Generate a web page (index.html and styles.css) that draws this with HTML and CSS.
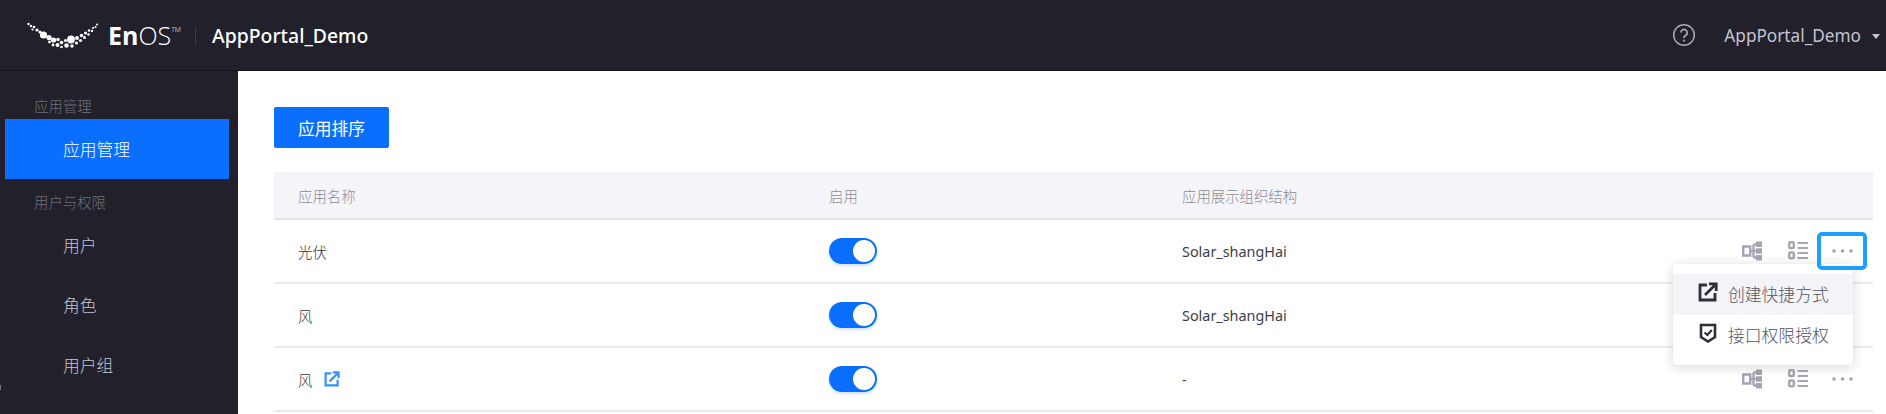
FILE: index.html
```html
<!DOCTYPE html>
<html>
<head>
    <title>AppPortal_Demo</title>
    <meta charset="utf-8">
    <meta name="viewport" content="width=device-width, initial-scale=1">
    <link rel="stylesheet" href="styles.css">
</head>
<body>
<svg class="svg-defs" width="0" height="0">
    <symbol id="icon-tree" viewBox="0 0 20 20">
        <path d="M1.200 5.500h7v9h-7zM8 10h6M11.500 3.500v13M11.500 3.500H14M11.500 16.500H14" fill="none" stroke="#a5a5b3" stroke-width="2.400"/>
        <path d="M14 .5h6v5.500h-6zM14 7.200h6v5.600h-6zM14 14h6v5.500h-6z" fill="#a5a5b3"/>
    </symbol>
    <symbol id="icon-list" viewBox="0 0 20 20">
        <rect x="1.200" y="1.200" width="4.600" height="5.800" rx="1" fill="none" stroke="#a5a5b3" stroke-width="2.400"/>
        <rect x="1.200" y="11.500" width="4.600" height="5.800" rx="1" fill="none" stroke="#a5a5b3" stroke-width="2.400"/>
        <path d="M9.500 2h10.500M9.500 7h10.500M9.500 12h10.500M9.500 17h10.500" fill="none" stroke="#a5a5b3" stroke-width="2.200"/>
    </symbol>
    <symbol id="icon-more" viewBox="0 0 21 6">
        <circle cx="2" cy="3" r="1.800" fill="#a5a5b3"/>
        <circle cx="10.500" cy="3" r="1.800" fill="#a5a5b3"/>
        <circle cx="19" cy="3" r="1.800" fill="#a5a5b3"/>
    </symbol>
    <symbol id="icon-share" viewBox="0 0 20 20">
        <path d="M9 3H2v15h15v-7" fill="none" stroke="currentColor" stroke-width="2.800"/>
        <path d="M7 13 16.500 3.500M11 1.800h7.200v7.200" fill="none" stroke="currentColor" stroke-width="2.800"/>
    </symbol>
    <symbol id="icon-shield" viewBox="0 0 20 20">
        <path d="M3 2h14v12l-7 4.500L3 14z" fill="none" stroke="currentColor" stroke-width="2.600"/>
        <path d="M6.500 9.500 9.300 12l4.500-5" fill="none" stroke="currentColor" stroke-width="2.200"/>
    </symbol>
</svg>

<header class="topbar">
    <div class="brand">
        <svg class="logo-dots" width="72" height="28" viewBox="0 0 72 28">
            <g fill="#fff">
                <circle cx="1.500" cy="2" r="1.200"/><circle cx="4" cy="4" r="1.200"/><circle cx="7" cy="5" r="1.300"/>
                <circle cx="5.500" cy="7.500" r="1.100"/><circle cx="10" cy="8" r="1.600"/><circle cx="13" cy="10" r="1.500"/>
                <circle cx="16.500" cy="13" r="3.600"/><circle cx="22" cy="15.500" r="2.600"/><circle cx="26.500" cy="18" r="2.600"/>
                <circle cx="22.500" cy="20" r="1.400"/><circle cx="26" cy="23" r="1.400"/><circle cx="30.500" cy="23" r="2"/>
                <circle cx="31" cy="17.500" r="1.800"/><circle cx="34.500" cy="20.500" r="1.800"/><circle cx="34.500" cy="25" r="1.300"/>
                <circle cx="39.500" cy="23.500" r="2.300"/><circle cx="38.500" cy="18.500" r="1.600"/><circle cx="44" cy="17.500" r="3.900"/>
                <circle cx="45" cy="24" r="1.800"/><circle cx="49.500" cy="21" r="1.600"/><circle cx="50" cy="16" r="2"/>
                <circle cx="53.500" cy="18.500" r="1.600"/><circle cx="54.500" cy="13.500" r="1.800"/><circle cx="57.500" cy="15.500" r="1.500"/>
                <circle cx="58.500" cy="11" r="1.600"/><circle cx="61.500" cy="12.500" r="1.300"/><circle cx="62" cy="8.500" r="1.300"/>
                <circle cx="65" cy="9" r="1.200"/><circle cx="66" cy="6" r="1.100"/><circle cx="68.500" cy="5" r="1.100"/>
                <circle cx="70" cy="2.500" r="1"/>
            </g>
        </svg>
        <div class="logo-text"><b>En</b>OS<sup>TM</sup></div>
        <span class="brand-sep"></span>
        <span class="app-title">AppPortal_Demo</span>
    </div>
    <div class="user-area">
        <svg class="help-icon" width="24" height="24" viewBox="0 0 24 24">
            <circle cx="12" cy="12" r="10.300" fill="none" stroke="#a9a9b6" stroke-width="1.500"/>
            <path d="M8.800 9.600a3.200 3.200 0 1 1 5 2.700c-1.200.8-1.800 1.300-1.800 2.700" fill="none" stroke="#a9a9b6" stroke-width="1.700"/>
            <circle cx="12" cy="17.600" r="1.100" fill="#a9a9b6"/>
        </svg>
        <span class="user-name">AppPortal_Demo</span>
        <span class="caret"></span>
    </div>
</header>

<div class="layout">
    <nav class="sidebar">
        <div class="nav-group">应用管理</div>
        <a class="nav-item active">应用管理</a>
        <div class="nav-group">用户与权限</div>
        <a class="nav-item">用户</a>
        <a class="nav-item">角色</a>
        <a class="nav-item">用户组</a>
        <span class="edge-mark"></span>
    </nav>

    <main class="content">
        <button class="btn-primary">应用排序</button>

        <div class="table">
            <div class="row head">
                <div class="col-name">应用名称</div>
                <div class="col-switch">启用</div>
                <div class="col-org">应用展示组织结构</div>
            </div>
            <div class="row">
                <div class="col-name">光伏</div>
                <div class="col-switch"><span class="switch"></span></div>
                <div class="col-org org-value">Solar_shangHai</div>
                <div class="col-actions">
                    <svg class="act"><use href="#icon-tree"/></svg>
                    <svg class="act"><use href="#icon-list"/></svg>
                    <span class="more focused"><svg class="dots"><use href="#icon-more"/></svg></span>
                    <div class="menu">
                        <div class="menu-item hover"><svg class="menu-icon"><use href="#icon-share"/></svg>创建快捷方式</div>
                        <div class="menu-item"><svg class="menu-icon"><use href="#icon-shield"/></svg>接口权限授权</div>
                    </div>
                </div>
            </div>
            <div class="row">
                <div class="col-name">风</div>
                <div class="col-switch"><span class="switch"></span></div>
                <div class="col-org org-value">Solar_shangHai</div>
            </div>
            <div class="row">
                <div class="col-name">风<svg class="link-icon"><use href="#icon-share"/></svg></div>
                <div class="col-switch"><span class="switch"></span></div>
                <div class="col-org org-value">-</div>
                <div class="col-actions">
                    <svg class="act"><use href="#icon-tree"/></svg>
                    <svg class="act"><use href="#icon-list"/></svg>
                    <span class="more"><svg class="dots"><use href="#icon-more"/></svg></span>
                </div>
            </div>
        </div>
    </main>
</div>
</body>
</html>
```

FILE: styles.css
```css
* {
    box-sizing: border-box;
}

html,
body {
    height: 100%;
}

body {
    margin: 0;
    overflow: hidden;
    font-family: "Noto Sans", "Noto Sans CJK SC", sans-serif;
    font-weight: 300;
    background-color: #fff;
    color: #33333d;
}

.svg-defs {
    display: block;
    height: 0;
}

.topbar {
    height: 71px;
    display: flex;
    align-items: center;
    justify-content: space-between;
    background-color: #22212b;
    border-bottom: 1px solid #14141a;
    padding: 0 6px 0 27px;
}

.brand {
    display: flex;
    align-items: center;
}

.logo-dots {
    display: block;
    margin-top: 2px;
}

.logo-text {
    margin-left: 9px;
    width: 79px;
    color: #fff;
    font-size: 25px;
    line-height: 30px;
    font-weight: 300;
    font-family: "Open Sans", sans-serif;
}

.logo-text b {
    font-weight: 700;
}

.logo-text sup {
    font-size: 7px;
    line-height: 0;
    vertical-align: 13px;
}

.brand-sep {
    width: 1px;
    height: 19px;
    background-color: #3b3a45;
    margin-left: 8px;
}

.app-title {
    margin-left: 16px;
    color: #fff;
    font-size: 19.4px;
    font-weight: 500;
}

.user-area {
    display: flex;
    align-items: center;
    color: #c4c4d0;
}

.user-name {
    margin-left: 28px;
    font-size: 17.2px;
    font-weight: 400;
}

.caret {
    margin-left: 11px;
    margin-top: 3px;
    border-left: 4.5px solid transparent;
    border-right: 4.5px solid transparent;
    border-top: 5px solid #c4c4d0;
}

.layout {
    display: flex;
    height: calc(100% - 71px);
}

.sidebar {
    position: relative;
    width: 238px;
    flex-shrink: 0;
    background-color: #22212b;
    padding: 24px 9px 0 5px;
}

.edge-mark {
    position: absolute;
    left: 0;
    top: 314px;
    width: 1px;
    height: 5px;
    background-color: #77777f;
}

.nav-group {
    height: 24px;
    line-height: 24px;
    padding-left: 29px;
    font-size: 14.4px;
    color: #6f6f7b;
}

.nav-item + .nav-group {
    margin-top: 12px;
}

.nav-item {
    display: block;
    height: 60px;
    line-height: 61px;
    padding-left: 58px;
    font-size: 16.8px;
    color: #c4c4d0;
}

.nav-item.active {
    background-color: #0a6fff;
    color: #fff;
}

.content {
    flex: 1;
    padding: 36px 13px 0 36px;
}

.btn-primary {
    display: block;
    width: 115px;
    height: 41px;
    padding: 0;
    border: none;
    border-radius: 2px;
    background-color: #0a6fff;
    color: #fff;
    font-family: inherit;
    font-size: 16.8px;
}

.table {
    margin-top: 24px;
}

.row {
    display: flex;
    align-items: center;
    height: 64px;
    font-size: 14.4px;
    border-bottom: 2px solid #ebebef;
}

.row.head {
    height: 48px;
    background-color: #f4f4f9;
    color: #8c8c96;
    border-bottom-color: #e3e3ea;
}

.col-name {
    display: flex;
    align-items: center;
    width: 555px;
    padding-left: 24px;
}

.col-switch {
    display: flex;
    align-items: center;
    width: 353px;
}

.col-org {
    flex: 1;
}

.org-value {
    font-weight: 400;
    color: #3d3d47;
}

.switch {
    position: relative;
    display: block;
    width: 48px;
    height: 26px;
    border-radius: 13px;
    background-color: #0a6fff;
    box-shadow: 0 2px 3px rgba(10, 111, 255, 0.2);
}

.switch::after {
    content: "";
    position: absolute;
    top: 2px;
    right: 2px;
    width: 22px;
    height: 22px;
    border-radius: 50%;
    background-color: #fff;
}

.col-actions {
    position: relative;
    display: flex;
    align-items: center;
    margin-right: 6px;
}

.act {
    width: 20px;
    height: 20px;
    margin-right: 26px;
}

.more {
    display: flex;
    align-items: center;
    justify-content: center;
    width: 50px;
    height: 38px;
    margin-left: -17px;
    border-radius: 5px;
}

.more.focused {
    position: relative;
    z-index: 6;
    border: 4px solid #1e9fff;
}

.dots {
    width: 21px;
    height: 6px;
}

.menu {
    position: absolute;
    top: 32px;
    right: 14px;
    width: 180px;
    padding: 10px 0 9px;
    background-color: #fff;
    border-radius: 4px;
    box-shadow: 0 2px 12px rgba(30, 30, 50, 0.18);
    z-index: 5;
}

.menu-item {
    display: flex;
    align-items: center;
    height: 41px;
    padding-left: 25px;
    padding-bottom: 2px;
    font-size: 16.8px;
    color: #55555f;
}

.menu-item.hover {
    background-color: #f3f3f8;
}

.menu-icon {
    width: 20px;
    height: 20px;
    margin-right: 10px;
    margin-top: -4px;
    color: #2f2f3a;
}

.link-icon {
    width: 16px;
    height: 16px;
    margin-left: 12px;
    color: #3a8fff;
}
```
